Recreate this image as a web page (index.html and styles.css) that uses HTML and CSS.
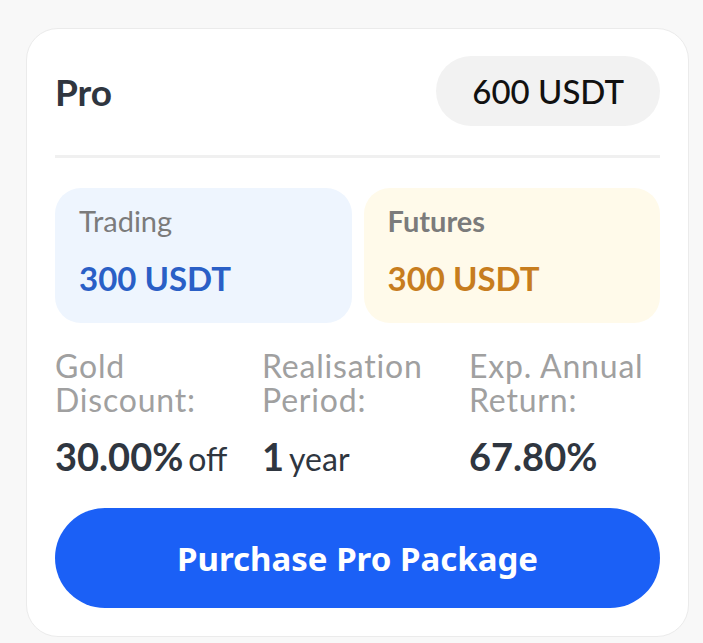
FILE: index.html
```html
<!DOCTYPE html>
<html>
  <head>
    <meta charset="utf-8">
    <title>Pro Package</title>
    <link rel="stylesheet" href="styles.css">
  </head>
  <body>
    <section class="card">
        <div class="header">
            <h1 class="name">Pro</h1>
            <span class="price">600 USDT</span>
        </div>
        <hr class="divider">
        <div class="split">
            <div class="part trading">
                <span class="partLabel">Trading</span>
                <span class="partValue">300 USDT</span>
            </div>
            <div class="part futures">
                <span class="partLabel futuresLabel">Futures</span>
                <span class="partValue">300 USDT</span>
            </div>
        </div>
        <div class="stats">
            <div class="stat">
                <p class="statLabel">Gold Discount:</p>
                <p class="statValue">30.00%<small>off</small></p>
            </div>
            <div class="stat">
                <p class="statLabel">Realisation Period:</p>
                <p class="statValue">1<small>year</small></p>
            </div>
            <div class="stat">
                <p class="statLabel">Exp. Annual Return:</p>
                <p class="statValue">67.80%</p>
            </div>
        </div>
        <button class="purchase">Purchase Pro Package</button>
    </section>
  </body>
</html>
```

FILE: styles.css
```css
body {
    margin: 0;
    background: #f8f8f8;
    font-family: Lato, "Liberation Sans", sans-serif;
}
.card {
    box-sizing: border-box;
    width: 663px;
    height: 609px;
    margin: 28px 0 0 26px;
    padding: 27px 28px 28px 28px;
    background: #fff;
    border: 1px solid #ebebeb;
    border-radius: 32px;
}
.header {
    display: flex;
    justify-content: space-between;
    align-items: center;
}
.name {
    margin: 0;
    font-size: 37px;
    font-weight: 700;
    color: #2f3640;
}
.price {
    height: 70px;
    line-height: 70px;
    padding: 0 36px;
    border-radius: 35px;
    background: #f2f2f2;
    font-size: 33px;
    font-weight: 500;
    color: #111;
}
.divider {
    height: 3px;
    margin: 29px 0 0 0;
    border: 0;
    background: #f0f0f0;
}
.split {
    display: grid;
    grid-template-columns: 1fr 1fr;
    gap: 12px;
    margin-top: 30px;
}
.part {
    display: flex;
    flex-direction: column;
    height: 135px;
    box-sizing: border-box;
    padding: 13px 24px;
    border-radius: 26px;
}
.trading {
    background: #eef5fe;
    color: #2a5fc6;
}
.futures {
    background: #fffaea;
    color: #c77d1e;
}
.partLabel {
    font-size: 29px;
    line-height: 40px;
    color: #7b7b7b;
}
.futuresLabel {
    font-weight: 700;
}
.partValue {
    margin-top: 15px;
    font-size: 33px;
    line-height: 44px;
    font-weight: 700;
}
.stats {
    display: grid;
    grid-template-columns: repeat(3, 1fr);
    gap: 16px;
    margin-top: 26px;
}
.stat p {
    margin: 0;
}
.statLabel {
    font-size: 32px;
    line-height: 34px;
    letter-spacing: 0.8px;
    color: #a0a0a0;
}
.statValue {
    margin-top: 17px !important;
    font-size: 38px;
    line-height: 44px;
    font-weight: 700;
    color: #2f3640;
}
.statValue small {
    margin-left: 5px;
    font-size: 32px;
    font-weight: 400;
}
.purchase {
    display: block;
    width: 100%;
    height: 100px;
    margin-top: 27px;
    border: 0;
    border-radius: 50px;
    background: #1b60f6;
    color: #fff;
    font-family: "Noto Sans", sans-serif;
    font-size: 33px;
    font-weight: 700;
}
```
